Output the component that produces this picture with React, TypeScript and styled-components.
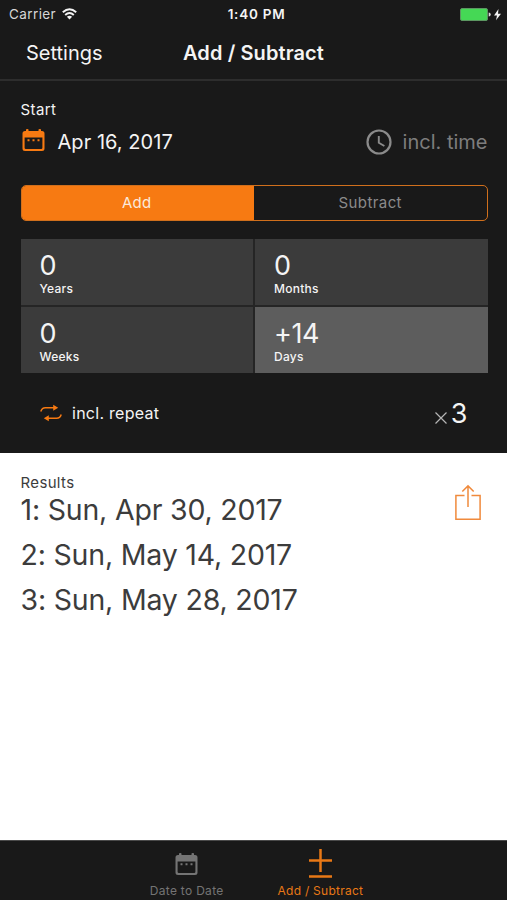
import React from "react";
import styled, { createGlobalStyle } from "styled-components";

const ORANGE = "#f77a12";
const DARK = "#191919";

const GlobalStyle = createGlobalStyle`
  * { box-sizing: border-box; }
  body { margin: 0; background: #fff; }
  button { appearance: none; border: 0; padding: 0; background: none; font: inherit; color: inherit; }
`;

const Screen = styled.div`
  width: 507px;
  height: 900px;
  display: flex;
  flex-direction: column;
  overflow: hidden;
  background: #fff;
  color: #f4f4f4;
  font-family: Inter, "Liberation Sans", sans-serif;
`;

const Label = styled.span<{ $size: number; $weight?: number; $spacing?: number; $color?: string; $line?: number }>`
  display: block;
  white-space: nowrap;
  font-size: ${(p) => p.$size}px;
  font-weight: ${(p) => p.$weight ?? 400};
  letter-spacing: ${(p) => p.$spacing ?? 0}px;
  line-height: ${(p) => p.$line ?? 24}px;
  color: ${(p) => p.$color ?? "inherit"};
`;

const Icon = styled.svg`
  display: block;
  flex: none;
  overflow: visible;
`;

const StatusBar = styled.div`
  display: grid;
  grid-template-columns: 1fr auto 1fr;
  align-items: center;
  height: 28px;
  padding: 0 6px 0 9px;
  background: ${DARK};
`;

const StatusGroup = styled.div<{ $end?: boolean }>`
  display: flex;
  align-items: center;
  gap: 6px;
  justify-content: ${(p) => (p.$end ? "flex-end" : "flex-start")};
`;

const Clock = styled.div`
  padding-left: 3px;
`;

const NavBar = styled.header`
  display: grid;
  grid-template-columns: 1fr auto 1fr;
  align-items: center;
  height: 53px;
  padding: 0 26px 1px;
  background: ${DARK};
  border-bottom: 2px solid #2d2d2d;
`;

const Form = styled.section`
  height: 372px;
  padding: 17px 19.5px 0 20.5px;
  background: ${DARK};
`;

const StartRow = styled.div`
  display: flex;
  justify-content: space-between;
  align-items: center;
  height: 40px;
  padding-left: 1.5px;
`;

const IconButton = styled.button<{ $gap: number; $color?: string }>`
  display: flex;
  align-items: center;
  gap: ${(p) => p.$gap}px;
  color: ${(p) => p.$color ?? "inherit"};
`;

const CalendarSlot = styled.span`
  color: ${ORANGE};
  padding-bottom: 5px;
`;

const Segments = styled.div`
  display: grid;
  grid-template-columns: 1fr 1fr;
  height: 36px;
  margin-top: 23px;
  border: 1.5px solid #d06f1c;
  border-radius: 5px;
  overflow: hidden;
`;

const Segment = styled.button<{ $active?: boolean }>`
  display: flex;
  align-items: center;
  justify-content: center;
  padding-right: ${(p) => (p.$active ? 2 : 0)}px;
  color: ${(p) => (p.$active ? "#fbe9da" : "#8b8b8b")};
  background: ${(p) => (p.$active ? ORANGE : "transparent")};
`;

const Units = styled.div`
  display: grid;
  grid-template-columns: 1fr 1fr;
  grid-template-rows: 66px 66px;
  gap: 2px;
  margin-top: 18px;
  background: #252525;
`;

const Unit = styled.button<{ $active?: boolean }>`
  display: flex;
  flex-direction: column;
  align-items: flex-start;
  padding: 11px 0 0 19px;
  background: ${(p) => (p.$active ? "#5d5d5d" : "#3b3b3b")};
`;

const RepeatRow = styled.div`
  display: flex;
  align-items: center;
  justify-content: space-between;
  height: 40px;
  margin-top: 20px;
  padding: 0 20px 0 19.5px;
`;

const RepeatCount = styled.button`
  display: flex;
  align-items: flex-end;
  gap: 4px;
  padding-top: 2px;
`;

const TimesSlot = styled.span`
  padding-bottom: 2px;
`;

const Results = styled.section`
  display: flex;
  justify-content: space-between;
  align-items: flex-start;
  height: 387px;
  padding: 19px 26px 0 20.5px;
  color: #3c3c3c;
`;

const ResultList = styled.ol`
  list-style: none;
  margin: -6px 0 0;
  padding: 0;
`;

const ShareButton = styled.button`
  margin-top: 13px;
`;

const TabBar = styled.nav`
  display: flex;
  justify-content: center;
  gap: 54px;
  height: 60px;
  padding-left: 6px;
  background: ${DARK};
  border-top: 1px solid #4a4a4a;
`;

const Tab = styled.button<{ $active?: boolean }>`
  display: flex;
  flex-direction: column;
  align-items: center;
  padding-top: 8px;
  color: ${(p) => (p.$active ? "#e87816" : "#747474")};
`;

const TabIcon = styled.div`
  display: flex;
  flex: none;
  align-items: center;
  justify-content: center;
  height: 30px;
  margin-bottom: 3px;
`;

const CalendarIcon = () => (
  <Icon width="23" height="22" viewBox="0 0 23 22">
    <path
      fillRule="evenodd"
      fill="currentColor"
      d="M3 2h1V.8Q4 0 5 0h.5Q6.500 0 6.500.8V2h10V.8q0-.8 1-.8h.5q1 0 1 .8V2h1q2.500 0 2.500 2.500v15q0 2.500-2.500 2.500H3Q.5 22 .5 19.500v-15Q.5 2 3 2zM2.600 8.500v10.200q0 1.200 1.200 1.200h15.400q1.200 0 1.200-1.200V8.500z"
    />
    <path fill="currentColor" d="M5.500 10.200h2v2h-2zM10.500 10.200h2v2h-2zM15.500 10.200h2v2h-2z" />
  </Icon>
);

const ClockIcon = () => (
  <Icon width="26" height="26" viewBox="0 0 26 26" fill="none" stroke="#8b8b8b" strokeWidth="2.200">
    <circle cx="13" cy="13" r="11.500" />
    <path d="M12.800 7v6.800l5.600 3.200" strokeWidth="1.900" />
  </Icon>
);

const WifiIcon = () => (
  <Icon width="15" height="12" viewBox="0 0 15 12" fill="none" stroke="#f4f4f4" strokeWidth="1.900">
    <path d="M.8 4.300Q7.500-2 14.200 4.300M3.200 7Q7.500 3 11.800 7" />
    <path d="M7.500 11.500 4.900 8.800Q7.500 6.800 10.100 8.800z" fill="#f4f4f4" stroke="none" />
  </Icon>
);

const BatteryIcon = () => (
  <Icon width="41" height="13" viewBox="0 0 41 13">
    <rect x=".5" y=".5" width="27" height="12" rx="1.500" fill="#45d855" stroke="#5c9661" />
    <path d="M28.700 4.500q2 0 2 2t-2 2z" fill="#ddd" />
    <path d="M38.500 1 34 7.400h3l-1 4.800 5-6.500h-3z" fill="#f4f4f4" />
  </Icon>
);

const RepeatIcon = () => (
  <Icon width="22" height="18" viewBox="0 0 22 18" fill="none" stroke={ORANGE} strokeWidth="1.500">
    <path d="M.8 7.500Q2 3.700 5.300 3.700h9M21.200 10.500q-1.200 3.800-4.500 3.800h-9" />
    <path d="M13.200 .7 18.200 3.700l-5 3zM8.800 11.300l-5 3 5 3z" fill={ORANGE} stroke="none" />
  </Icon>
);

const TimesIcon = () => (
  <Icon width="12" height="12" viewBox="0 0 12 12" stroke="#b5b5b5" strokeWidth="1.200">
    <path d="m.5.5 11 11M11.500.5l-11 11" />
  </Icon>
);

const ShareIcon = () => (
  <Icon width="26" height="35" viewBox="0 0 26 35" fill="none" stroke="#f08a3c" strokeWidth="1.500">
    <path d="M9.500 10.500H.9v23.700h24.200V10.500h-8.600M13 22V1M7.300 6.500 13 .9l5.700 5.600" />
  </Icon>
);

const PlusMinusIcon = () => (
  <Icon width="23" height="30" viewBox="0 0 23 30" stroke="currentColor" strokeWidth="2.500">
    <path d="M0 11.500h23M11.500 0v23M0 27.500h23" />
  </Icon>
);

const units = [
  { value: "0", name: "Years" },
  { value: "0", name: "Months" },
  { value: "0", name: "Weeks" },
  { value: "+14", name: "Days", active: true },
];

const results = ["1: Sun, Apr 30, 2017", "2: Sun, May 14, 2017", "3: Sun, May 28, 2017"];

export default function App() {
  return (
    <Screen>
      <GlobalStyle />
      <StatusBar>
        <StatusGroup>
          <Label $size={13.5} $spacing={0.4} $color="#d6d6d6">Carrier</Label>
          <WifiIcon />
        </StatusGroup>
        <Clock>
          <Label $size={13.5} $weight={600} $spacing={0.75}>1:40 PM</Label>
        </Clock>
        <StatusGroup $end>
          <BatteryIcon />
        </StatusGroup>
      </StatusBar>
      <NavBar>
        <Label $size={20}>Settings</Label>
        <Label $size={20} $weight={600} $spacing={0.1}>Add / Subtract</Label>
      </NavBar>
      <Form>
        <Label $size={15} $spacing={0.4}>Start</Label>
        <StartRow>
          <IconButton $gap={12.5}>
            <CalendarSlot><CalendarIcon /></CalendarSlot>
            <Label $size={20} $spacing={0.05}>Apr 16, 2017</Label>
          </IconButton>
          <IconButton $gap={11} $color="#7d7d7d">
            <ClockIcon />
            <Label $size={20} $line={26}>incl. time</Label>
          </IconButton>
        </StartRow>
        <Segments>
          <Segment $active><Label $size={15} $spacing={0.3}>Add</Label></Segment>
          <Segment><Label $size={15} $spacing={0.4}>Subtract</Label></Segment>
        </Segments>
        <Units>
          {units.map((u) => (
            <Unit key={u.name} $active={u.active}>
              <Label $size={27} $line={31} $spacing={-0.4}>{u.value}</Label>
              <Label $size={12} $weight={500} $line={15} $spacing={0.25}>{u.name}</Label>
            </Unit>
          ))}
        </Units>
        <RepeatRow>
          <IconButton $gap={10}>
            <RepeatIcon />
            <Label $size={16} $spacing={0.27}>incl. repeat</Label>
          </IconButton>
          <RepeatCount>
            <TimesSlot><TimesIcon /></TimesSlot>
            <Label $size={27}>3</Label>
          </RepeatCount>
        </RepeatRow>
      </Form>
      <Results>
        <div>
          <Label $size={15} $line={21} $spacing={0.35}>Results</Label>
          <ResultList>
            {results.map((r) => (
              <li key={r}><Label $size={28.5} $line={45} $spacing={-0.2}>{r}</Label></li>
            ))}
          </ResultList>
        </div>
        <ShareButton><ShareIcon /></ShareButton>
      </Results>
      <TabBar>
        <Tab>
          <TabIcon><CalendarIcon /></TabIcon>
          <Label $size={12} $line={18} $spacing={0.3}>Date to Date</Label>
        </Tab>
        <Tab $active>
          <TabIcon><PlusMinusIcon /></TabIcon>
          <Label $size={12} $line={18} $spacing={0.25}>Add / Subtract</Label>
        </Tab>
      </TabBar>
    </Screen>
  );
}
